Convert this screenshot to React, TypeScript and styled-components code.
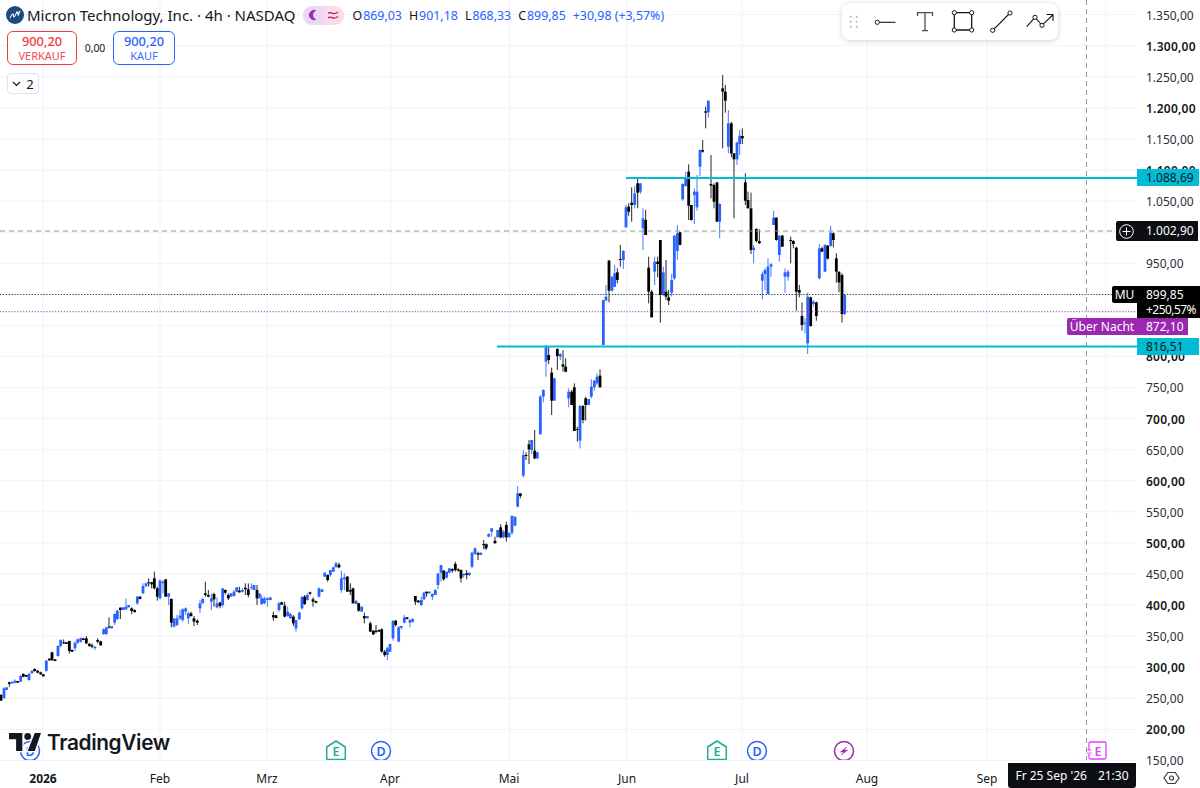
import React from "react";
import styled, { createGlobalStyle } from "styled-components";

const FONT = `"Noto Sans", "Open Sans", sans-serif`;
const INK = "#131722";
const BLUE = "#2962ff";
const RED = "#f23645";
const TEAL = "#00bcd4";
const PURPLE = "#9c27b0";

const Global = createGlobalStyle`
  html, body { margin: 0; padding: 0; height: 100%; background: #fff; overflow: hidden; }
  #root { height: 100%; }
`;

type C = number[];
// [x, wickTop, wickBottom, bodyTop, bodyBottom, black?] in 3x crop coordinates
const z9: C[] = [[3,432,452,435,452,1],[12,412,445,415,445,0],[20,412,420,412,420,0],[28,395,410,397,402,1],[37,395,400,395,400,0],[45,388,400,392,398,0],[53,393,398,393,398,1],[62,375,395,378,395,0],[70,370,382,372,380,1],[79,375,380,375,380,1],[87,368,392,372,390,0],[96,362,370,362,370,0],[104,355,365,357,363,1],[113,360,370,362,368,1],[122,365,375,367,373,1],[130,372,380,373,379,1],[139,330,365,332,362,0],[148,325,332,326,331,1],[156,305,333,307,330,1],[165,328,333,328,333,1],[174,285,320,288,318,0],[182,268,292,270,288,0],[191,268,282,277,280,1],[199,277,282,277,282,1],[208,272,310,273,303,1],[216,298,306,300,305,1],[225,275,303,278,295,0],[233,265,282,268,278,0],[242,262,278,265,275,0],[250,265,270,265,270,1],[259,258,282,265,280,1],[268,278,290,282,288,1],[276,280,295,286,290,1],[285,290,300,290,294,0],[293,265,280,270,275,1],[302,272,287,274,286,1],[311,235,255,238,252,0],[319,232,255,232,252,0],[327,202,235,230,233,1],[335,228,235,228,235,0],[344,190,225,192,218,0],[352,180,210,182,207,0],[361,172,207,173,180,1],[370,172,180,172,180,0],[378,145,180,170,178,0],[386,165,172,165,172,0],[395,172,192,175,183,1],[404,178,188,180,186,1],[412,138,165,140,160,0],[420,138,148,140,147,1],[429,100,132,108,130,0],[438,98,112,100,108,0],[446,85,110,97,100,1],[455,95,115,97,103,1],[463,65,118,85,115,1],[472,110,152,115,140,1],[480,88,148,92,145,0],[489,90,130,95,100,0],[497,88,140,88,140,1],[506,130,165,130,140,0],[514,145,232,147,218,1],[522,205,232,205,230,0],[531,195,228,205,225,0],[540,180,210,197,205,0],[548,175,215,178,210,0],[557,172,195,175,185,0],[565,185,222,190,205,0],[573,185,200,190,198,1],[582,198,228,205,215,1],[592,208,225,212,218,1],[600,150,190,160,175,0],[608,143,160,147,160,0],[616,95,140,130,135,1],[625,120,142,135,140,1],[634,130,180,145,155,0],[642,128,170,132,148,1],[651,142,175,160,172,0],[660,155,175,158,168,1],[668,115,172,115,165,0],[676,118,133,120,128,1],[685,130,150,135,145,1],[693,130,140,130,140,0],[702,120,140,125,138,0],[710,112,125,112,125,0],[718,110,128,122,127,1],[727,115,128,120,125,0],[736,100,135,113,118,1],[745,100,142,118,135,1],[754,100,118,112,115,0],[762,105,120,105,120,0],[771,105,165,120,145,1],[778,130,145,130,145,0]];
const z10: C[] = [[5,165,195,175,192,0],[13,170,193,175,190,0],[22,172,200,175,180,0],[31,172,180,172,180,0],[40,215,242,225,232,1],[48,225,235,226,234,1],[57,185,215,190,210,0],[65,185,195,187,194,1],[74,185,232,197,230,1],[83,200,230,215,228,0],[91,218,235,222,235,0],[100,225,258,230,250,1],[108,240,275,240,265,0],[118,215,240,218,238,0],[126,170,208,170,205,0],[134,165,195,170,192,1],[142,160,182,165,180,0],[150,155,165,157,161,1],[159,172,200,178,185,1],[168,182,190,183,188,1],[177,142,172,145,170,0],[186,148,156,148,156,0],[194,98,110,98,110,0],[203,103,125,105,120,1],[211,90,110,90,105,0],[220,80,95,82,95,0],[228,65,82,70,82,0],[237,68,85,74,82,1],[244,92,158,115,150,0],[253,100,150,112,118,0],[262,108,155,110,155,1],[271,130,165,150,155,1],[279,143,190,145,190,1],[288,182,192,182,192,0],[296,188,215,190,212,1],[305,200,215,200,215,0],[313,218,250,228,235,1],[322,228,235,228,235,0],[331,245,275,250,275,1],[340,270,285,272,283,1],[348,255,280,272,276,1],[357,268,275,270,275,1],[365,265,338,268,335,1],[374,330,350,335,345,1],[382,320,360,325,345,0],[390,312,335,312,335,0],[399,240,302,243,295,0],[407,240,260,242,255,1],[416,258,305,262,305,0],[424,258,268,258,263,0],[433,225,250,232,248,0],[441,232,238,232,237,1],[450,238,262,240,248,0],[458,235,248,237,245,0],[466,168,195,168,185,1],[475,180,188,182,187,1],[484,170,198,180,195,0],[492,155,180,158,178,0],[500,155,170,155,160,1],[508,155,160,155,160,0],[517,160,180,162,170,0],[526,148,165,150,165,0],[534,100,148,100,135,0],[543,75,125,75,98,0],[551,90,122,92,118,1],[560,95,115,95,113,0],[568,85,100,85,98,0],[577,85,98,87,92,1],[586,65,95,72,90,1],[595,85,95,88,92,1],[603,88,128,90,115,1],[611,100,112,102,106,0],[620,90,118,100,105,1],[628,98,108,98,105,0],[636,35,85,38,80,0],[645,22,45,25,42,0],[654,35,60,40,44,1],[662,38,45,38,45,0],[671,0,28,12,15,1],[680,12,20,12,20,0]];
const z8: C[] = [[-12,640,660,645,655,1],[-4,610,622,612,620,0],[5,595,620,595,605,0],[15,620,640,632,640,1],[23,600,622,600,622,0],[32,583,625,592,622,1],[40,600,625,605,622,0],[49,575,635,585,622,1],[57,608,622,608,622,0],[66,555,615,558,608,0],[75,560,587,560,587,0],[83,468,532,490,530,0],[91,490,505,490,498,1],[100,360,442,375,437,0],[108,367,390,375,378,1],[117,330,402,343,358,1],[125,330,372,330,360,0],[134,300,388,362,385,1],[142,365,387,367,385,0],[151,195,313,200,313,0],[160,178,217,180,200,0],[168,45,140,48,95,0],[176,48,102,75,90,1],[185,113,255,128,212,1],[193,143,212,145,212,0],[202,55,120,57,78,1],[211,70,90,72,80,0],[219,60,125,103,110,1],[227,85,127,110,125,1],[236,175,232,185,205,0],[245,180,225,185,225,1],[253,160,303,172,303,1],[262,290,335,297,300,1],[270,225,355,228,332,0],[279,225,280,228,270,1],[287,200,272,205,225,1],[296,207,225,207,225,0],[304,148,205,170,200,0],[313,150,182,152,172,0],[321,130,165,140,160,0],[330,118,172,137,172,1]];
const z7: C[] = [[40,690,825,690,825,0],[48,645,690,680,692,0],[57,570,697,572,662,1],[66,620,665,620,662,0],[74,585,650,610,650,0],[82,595,640,607,630,1],[91,525,590,567,570,1],[100,540,597,543,570,0],[108,405,472,412,472,0],[116,400,437,410,425,1],[125,352,455,398,405,1],[134,348,415,370,405,0],[143,325,415,340,368,1],[151,340,372,340,365,0],[159,415,540,445,475,0],[167,420,495,450,495,1],[176,560,700,593,665,1],[185,660,742,665,742,1],[194,560,645,575,605,0],[203,560,622,575,582,1],[211,510,758,510,675,1],[220,590,678,607,675,0],[228,570,690,665,680,1],[236,660,705,682,692,1],[245,612,680,630,668,0],[253,495,630,497,625,0],[262,465,570,490,543,0],[270,485,525,487,525,1],[278,340,392,342,388,0],[287,305,350,322,348,0],[296,283,450,305,407,1],[304,405,452,405,450,1],[313,355,462,365,375,0],[321,315,422,365,412,0],[330,238,318,240,290,0],[338,210,248,240,245,1],[347,110,175,124,128,1],[355,92,143,92,127,0],[363,255,385,342,347,1],[372,340,415,345,395,1],[381,337,455,337,455,1],[389,400,505,402,455,0],[398,15,235,55,65,1],[406,45,128,65,92,1],[415,120,250,160,230,0],[424,155,262,160,250,1],[432,250,445,250,268,1],[441,215,285,218,268,0],[449,180,255,197,222,0],[457,175,222,198,205,1],[466,310,405,337,392,1],[474,365,415,390,415,1],[483,368,552,415,540,1],[491,525,580,533,540,0],[499,475,517,477,513,1],[508,478,522,513,520,1],[517,605,688,612,632,0],[525,595,660,600,612,0],[534,565,672,590,672,0],[543,580,620,583,590,0],[551,422,465,443,465,0],[559,442,512,443,510,1],[568,495,575,497,555,0],[577,495,530,497,530,1],[585,595,668,607,620,0],[594,600,632,605,620,0],[602,500,580,510,513,1],[610,510,535,513,522,1],[619,530,722,533,665,1],[628,645,682,660,668,1],[636,697,782,738,765,1],[645,745,790,758,760,0],[653,668,852,680,820,0],[662,680,770,682,768,1],[670,690,710,695,702,0],[679,695,752,697,738,1],[688,522,628,535,625,0],[696,530,545,535,545,1],[705,522,605,525,605,0],[713,525,568,527,566,1],[722,467,530,488,528,0],[730,487,532,490,510,1],[739,550,638,565,605,1],[747,605,667,605,637,1],[756,610,758,615,732,1],[764,675,735,675,732,0]];

const sets: [C[], number, number][] = [[z9, 0, 550], [z10, 260, 540], [z8, 490, 330], [z7, 590, 70]];

const yOf = (p: number) => 574 + (450 - p) * 0.6215;
const prices = [1350,1300,1250,1200,1150,1100,1050,1000,950,900,850,800,750,700,650,600,550,500,450,400,350,300,250,200,150];
const fmt = (p: number) => (p >= 1000 ? `${Math.floor(p / 1000)}.${String(p % 1000).padStart(3, "0")},00` : `${p},00`);
const verticals = [43, 160, 267, 390.7, 509.5, 626.5, 742, 867, 987, 1105.7];

const Root = styled.div`
  display: grid;
  grid-template-columns: 1138px 62px;
  grid-template-rows: 761px 27px;
  width: 1200px;
  height: 788px;
  font-family: ${FONT};
  color: ${INK};
  background: #fff;
  overflow: hidden;
`;
const ChartPane = styled.div`
  position: relative;
  overflow: hidden;
  border-bottom: 1px solid #f0f3fa;
`;
const ChartCanvas = styled.svg`
  display: block;
  position: absolute;
  inset: 0;
`;
const Legend = styled.div`
  position: absolute;
  left: 6px;
  top: 5px;
  display: flex;
  flex-direction: column;
  align-items: flex-start;
`;
const TitleRow = styled.div`
  display: flex;
  align-items: center;
  height: 20px;
`;
const Title = styled.span`
  margin-left: 3px;
  font-size: 15px;
  white-space: nowrap;
`;
const SessionPill = styled.span`
  display: flex;
  align-items: center;
  justify-content: space-between;
  width: 41px;
  height: 19px;
  margin-left: 8px;
  padding: 0 5px;
  box-sizing: border-box;
  border-radius: 9px;
  background: linear-gradient(90deg, #ecd8f3 0%, #ecd8f3 45%, #fbdbe6 60%, #fbdbe6 100%);
`;
const Ohlc = styled.span`
  display: flex;
  margin-left: 8px;
  font-size: 12.4px;
  white-space: nowrap;
`;
const OhlcPair = styled.span`
  margin-right: 7px;
  color: ${BLUE};
  b { font-weight: 400; color: ${INK}; margin-right: 1px; }
`;
const TradeRow = styled.div`
  display: flex;
  align-items: center;
  margin: 6px 0 0 1px;
`;
const TradeButton = styled.div<{ $color: string; $w: number }>`
  display: flex;
  flex-direction: column;
  align-items: center;
  justify-content: center;
  box-sizing: border-box;
  width: ${(p) => p.$w}px;
  height: 34px;
  border: 1px solid ${(p) => p.$color};
  border-radius: 6px;
  background: #fff;
  color: ${(p) => p.$color};
`;
const TradePrice = styled.span`
  font-size: 12.8px;
  line-height: 15px;
  font-weight: 500;
`;
const TradeSide = styled.span`
  font-size: 11px;
  line-height: 13px;
  opacity: 0.9;
`;
const Spread = styled.span`
  width: 36px;
  text-align: center;
  font-size: 10.4px;
`;
const Collapse = styled.div`
  display: flex;
  align-items: center;
  justify-content: center;
  gap: 5px;
  box-sizing: border-box;
  width: 32px;
  height: 21px;
  margin: 8px 0 0 1px;
  border: 1px solid #e0e3eb;
  border-radius: 4px;
  background: #fff;
  font-size: 13px;
`;
const Toolbar = styled.div`
  position: absolute;
  left: 842px;
  top: 3px;
  display: flex;
  align-items: center;
  width: 216px;
  height: 37px;
  border-radius: 8px;
  background: #fff;
  box-shadow: 0 1px 5px rgba(19, 23, 34, 0.2);
`;
const Grip = styled.svg`
  width: 26px;
  height: 37px;
  flex: none;
`;
const Tool = styled.svg`
  width: 38px;
  height: 37px;
  flex: none;
`;
const Marker = styled.svg`
  position: absolute;
  top: 740px;
  width: 22px;
  height: 21px;
  overflow: visible;
`;
const Logo = styled.div`
  position: absolute;
  left: 9px;
  top: 727px;
  display: flex;
  align-items: center;
  gap: 6px;
  height: 30px;
  font-family: Inter, ${FONT};
  font-size: 20.8px;
  font-weight: 600;
  letter-spacing: -0.35px;
  color: #131722;
`;
const LogoMark = styled.svg`
  width: 32px;
  height: 18px;
  flex: none;
  overflow: visible;
`;
const PriceAxis = styled.div`
  position: relative;
  display: flex;
  flex-direction: column;
  padding-top: 5.7px;
  z-index: 2;
`;
const PriceTick = styled.div<{ $major: boolean }>`
  flex: none;
  height: 31.075px;
  line-height: 19px;
  padding-left: 8px;
  font-size: 12px;
  font-weight: ${(p) => (p.$major ? 600 : 400)};
  letter-spacing: ${(p) => (p.$major ? "0.25px" : "0")};
  color: ${(p) => (p.$major ? INK : "#2a2e39")};
  white-space: nowrap;
`;
const PriceTag = styled.div<{ $bg: string; $fg: string; $w: number; $top: number; $h?: number }>`
  position: absolute;
  left: -1px;
  top: ${(p) => p.$top}px;
  width: ${(p) => p.$w}px;
  height: ${(p) => p.$h ?? 17}px;
  box-sizing: border-box;
  padding-left: 9px;
  background: ${(p) => p.$bg};
  color: ${(p) => p.$fg};
  font-size: 12px;
  line-height: ${(p) => p.$h ?? 17}px;
  white-space: nowrap;
`;
const TwoLine = styled.div`
  line-height: 15px;
  padding-top: 1px;
`;
const Change = styled.span`
  letter-spacing: -0.55px;
`;
const SideTag = styled.div<{ $bg: string; $w: number; $top: number; $h: number }>`
  position: absolute;
  top: ${(p) => p.$top}px;
  right: 63px;
  display: flex;
  align-items: center;
  justify-content: center;
  width: ${(p) => p.$w}px;
  height: ${(p) => p.$h}px;
  border-radius: 2px 0 0 2px;
  background: ${(p) => p.$bg};
  color: #fff;
  font-size: 12px;
  white-space: nowrap;
`;
const TimeAxis = styled.div`
  position: relative;
`;
const TimeTick = styled.span<{ $bold?: boolean }>`
  position: absolute;
  top: 9px;
  transform: translateX(-50%);
  font-size: 12px;
  line-height: 17px;
  font-weight: ${(p) => (p.$bold ? 700 : 400)};
`;
const TimeCursor = styled.div`
  position: absolute;
  left: 1008px;
  top: 2px;
  display: flex;
  align-items: center;
  justify-content: center;
  gap: 11px;
  width: 128px;
  height: 25px;
  border-radius: 0 0 3px 3px;
  background: #0c0e14;
  color: #fff;
  font-size: 12px;
  white-space: nowrap;
`;
const Corner = styled.div`
  display: flex;
  align-items: center;
  justify-content: center;
  padding: 7px 0 0 4px;
`;

const MU = () => (
  <svg width="18" height="18" viewBox="0 0 18 18">
    <circle cx="9" cy="9" r="9" fill="#1c4b80" />
    <path d="M4 12c1-2 2-4 3-4s0 3 1 3 2-4 3-5 1 2 1 3 1-2 2-4" fill="none" stroke="#fff" strokeWidth="1.1" />
  </svg>
);

const Candles = () => (
  <>
    {sets.map(([list, ox, oy], s) =>
      list.map(([x, wt, wb, bt, bb, k], i) => {
        const cx = ox + x / 3;
        const col = k ? "#000" : BLUE;
        return (
          <g key={`${s}-${i}`}>
            <rect x={cx - 0.5} y={oy + wt / 3} width={1} height={(wb - wt) / 3} fill={col} opacity={0.85} />
            <rect x={cx - 1.4} y={oy + bt / 3} width={2.8} height={Math.max(1, (bb - bt) / 3)} fill={col} />
          </g>
        );
      })
    )}
  </>
);

const Node = ({ x, y }: { x: number; y: number }) => (
  <circle cx={x} cy={y} r="2.1" fill="#fff" stroke="#131722" strokeWidth="1" />
);

const EMark = ({ x }: { x: number }) => (
  <Marker style={{ left: x - 11 }} viewBox="0 0 22 21">
    <path d="M1.7 7 11 1l9.3 6v11.5a1 1 0 0 1-1 1H2.7a1 1 0 0 1-1-1z" fill="#fff" stroke="#22ab94" strokeWidth="1.5" />
    <text x="11" y="16" textAnchor="middle" fontFamily={FONT} fontSize="12.5" fontWeight="600" fill="#22ab94">E</text>
  </Marker>
);
const DMark = ({ x }: { x: number }) => (
  <Marker style={{ left: x - 11 }} viewBox="0 0 22 21">
    <circle cx="11" cy="11" r="9.5" fill="#fff" stroke={BLUE} strokeWidth="1.5" />
    <text x="11" y="15.5" textAnchor="middle" fontFamily={FONT} fontSize="12.5" fontWeight="600" fill={BLUE}>D</text>
  </Marker>
);

export default function App() {
  return (
    <Root>
      <Global />
      <ChartPane>
        <ChartCanvas width="1138" height="761" viewBox="0 0 1138 761">
          {prices.map((p) => (
            <line key={p} x1="0" x2="1136" y1={yOf(p)} y2={yOf(p)} stroke="#f0f3fa" strokeWidth="1" />
          ))}
          {verticals.map((x) => (
            <line key={x} x1={x} x2={x} y1="0" y2="761" stroke="#f0f3fa" strokeWidth="1" />
          ))}
          <Candles />
          <line x1="0" x2="1115" y1="294.5" y2="294.5" stroke="#131722" strokeWidth="1.2" strokeDasharray="1.2 1.7" opacity="0.85" />
          <line x1="0" x2="1138" y1="311.7" y2="311.7" stroke={PURPLE} strokeWidth="1.2" strokeDasharray="1.2 1.7" opacity="0.75" />
          <line x1="0" x2="1115" y1="231" y2="231" stroke="#9598a1" strokeWidth="1" strokeDasharray="5 4" />
          <line x1="1086.5" x2="1086.5" y1="0" y2="761" stroke="#9598a1" strokeWidth="1" strokeDasharray="5 4" />
          <line x1="626" x2="1138" y1="178" y2="178" stroke={TEAL} strokeWidth="2" />
          <line x1="497" x2="1138" y1="346.5" y2="346.5" stroke={TEAL} strokeWidth="2" />
        </ChartCanvas>

        <Legend>
          <TitleRow>
            <MU />
            <Title>Micron Technology, Inc. · 4h · NASDAQ</Title>
            <SessionPill>
              <svg width="12" height="12" viewBox="0 0 12 12">
                <path d="M7.5 1.5a4.7 4.7 0 1 0 0 9 4.9 4.9 0 0 1 0-9z" fill={PURPLE} stroke={PURPLE} />
              </svg>
              <svg width="12" height="12" viewBox="0 0 12 12" fill="none" stroke="#c2185b" strokeWidth="1.4">
                <path d="M1 4.5c2-2 3.5-.5 5 0s3 0 5-1.5M1 9c2-2 3.5-.5 5 0s3 0 5-1.500" />
              </svg>
            </SessionPill>
            <Ohlc>
              <OhlcPair><b>O</b>869,03</OhlcPair>
              <OhlcPair><b>H</b>901,18</OhlcPair>
              <OhlcPair><b>L</b>868,33</OhlcPair>
              <OhlcPair><b>C</b>899,85</OhlcPair>
              <OhlcPair>+30,98 (+3,57%)</OhlcPair>
            </Ohlc>
          </TitleRow>
          <TradeRow>
            <TradeButton $color={RED} $w={70}>
              <TradePrice>900,20</TradePrice>
              <TradeSide>VERKAUF</TradeSide>
            </TradeButton>
            <Spread>0,00</Spread>
            <TradeButton $color={BLUE} $w={62}>
              <TradePrice>900,20</TradePrice>
              <TradeSide>KAUF</TradeSide>
            </TradeButton>
          </TradeRow>
          <Collapse>
            <svg width="9" height="6" viewBox="0 0 9 6" fill="none" stroke="#131722" strokeWidth="1.2">
              <path d="m1 1 3.5 3.5L8 1" />
            </svg>
            2
          </Collapse>
        </Legend>

        <Toolbar>
          <Grip viewBox="0 0 26 37" fill="#b2b5be">
            {[8.7, 14.7].map((x) =>
              [13.7, 18.7, 23.7].map((y) => <circle key={`${x}-${y}`} cx={x} cy={y} r="1" />)
            )}
          </Grip>
          <Tool viewBox="0 0 38 37" fill="none" stroke="#131722" strokeWidth="1.1">
            <path d="M11.5 19.3h16" />
            <Node x={9.3} y={19.3} />
          </Tool>
          <Tool viewBox="0 0 38 37" fill="none" stroke="#4a4e58" strokeWidth="1.3">
            <path d="M11.5 13V9.7h15V13M19 9.7v18M16 27.7h6" />
          </Tool>
          <Tool viewBox="0 0 38 37" fill="none" stroke="#131722" strokeWidth="1.3">
            <path d="M10.3 9.7h17.4V27H10.3z" />
            <Node x={10.3} y={9.7} />
            <Node x={27.7} y={9.7} />
            <Node x={10.3} y={27} />
            <Node x={27.7} y={27} />
          </Tool>
          <Tool viewBox="0 0 38 37" fill="none" stroke="#131722" strokeWidth="1.1">
            <path d="M10.7 27.3 28 10" />
            <Node x={10.7} y={27.3} />
            <Node x={28} y={10} />
          </Tool>
          <Tool viewBox="0 0 38 37" fill="none" stroke="#131722" strokeWidth="1.1">
            <path d="M6.7 23.7l8.3-9.4 7 8L32.7 12M26.5 11.5h6.5v6.5" />
            <Node x={15} y={14.3} />
            <Node x={22} y={22.3} />
          </Tool>
        </Toolbar>

        <DMark x={30} />
        <EMark x={336} />
        <DMark x={381} />
        <EMark x={716.5} />
        <DMark x={756.5} />
        <Marker style={{ left: 833 }} viewBox="0 0 22 21">
          <circle cx="11" cy="11" r="9.5" fill="#fff" stroke={PURPLE} strokeWidth="1.5" />
          <path d="m13.5 7-6 5H11l-2.500 3 6-5H11z" fill={PURPLE} stroke={PURPLE} strokeWidth="0.5" />
        </Marker>
        <Marker style={{ left: 1086 }} viewBox="0 0 22 21">
          <path d="M3 10V3.5A1.5 1.5 0 0 1 4.5 2h14A1.5 1.5 0 0 1 20 3.5v14a1.5 1.5 0 0 1-1.5 1.5h-14A1.5 1.5 0 0 1 3 17.5V14" fill="#fff" stroke="#e040fb" strokeWidth="1.3" />
          <path d="M.5 10.5c1.5-1 2.5 0 5-.5M.5 13.5c1.500-1 2.500 0 5-.5" fill="none" stroke="#e040fb" strokeWidth="1" />
          <text x="12" y="15.5" textAnchor="middle" fontFamily={FONT} fontSize="12.5" fontWeight="600" fill="#e040fb">E</text>
        </Marker>

        <Logo>
          <LogoMark viewBox="0 0 36 20">
            <g stroke="#fff" strokeWidth="3" fill="#fff">
              <path d="M15 0H0v7h8v13h7zM29 20h-8L29 0h7z" />
              <circle cx="21" cy="3.8" r="3.8" />
            </g>
            <path d="M15 0H0v7h8v13h7zM29 20h-8L29 0h7z" fill="#131722" />
            <circle cx="21" cy="3.8" r="3.8" fill="#131722" />
          </LogoMark>
          TradingView
        </Logo>
      </ChartPane>

      <PriceAxis>
        {prices.map((p) => (
          <PriceTick key={p} $major={p % 100 === 0}>{fmt(p)}</PriceTick>
        ))}
        <PriceTag $bg={TEAL} $fg={INK} $w={62} $top={169}>1.088,69</PriceTag>
        <SideTag $bg="#0c0e14" $w={21} $top={221} $h={20}>
          <svg width="15" height="15" viewBox="0 0 15 15" fill="none" stroke="#fff" strokeWidth="1">
            <circle cx="7.5" cy="7.5" r="6.8" />
            <path d="M7.5 3.5v8M3.5 7.5h8" />
          </svg>
        </SideTag>
        <PriceTag $bg="#0c0e14" $fg="#fff" $w={61} $top={221} $h={20}>1.002,90</PriceTag>
        <SideTag $bg="#000" $w={25} $top={286} $h={17}>MU</SideTag>
        <PriceTag $bg="#000" $fg="#fff" $w={63} $top={286} $h={32}>
          <TwoLine>
            899,85
            <br />
            <Change>+250,57%</Change>
          </TwoLine>
        </PriceTag>
        <SideTag $bg={PURPLE} $w={70} $top={318} $h={17}>Über Nacht</SideTag>
        <PriceTag $bg={PURPLE} $fg="#fff" $w={51} $top={318}>872,10</PriceTag>
        <PriceTag $bg={TEAL} $fg={INK} $w={62} $top={338}>816,51</PriceTag>
      </PriceAxis>

      <TimeAxis>
        <TimeTick $bold style={{ left: 43 }}>2026</TimeTick>
        <TimeTick style={{ left: 160 }}>Feb</TimeTick>
        <TimeTick style={{ left: 267 }}>Mrz</TimeTick>
        <TimeTick style={{ left: 390 }}>Apr</TimeTick>
        <TimeTick style={{ left: 509 }}>Mai</TimeTick>
        <TimeTick style={{ left: 627 }}>Jun</TimeTick>
        <TimeTick style={{ left: 742 }}>Jul</TimeTick>
        <TimeTick style={{ left: 867 }}>Aug</TimeTick>
        <TimeTick style={{ left: 987 }}>Sep</TimeTick>
        <TimeCursor>
          <span>Fr 25 Sep &#39;26</span>
          <span>21:30</span>
        </TimeCursor>
      </TimeAxis>
      <Corner>
        <svg width="17" height="14" viewBox="0 0 17 14" fill="none" stroke="#3a3e49" strokeWidth="1.2">
          <path d="M4.8 1.5h7.400L16 7l-3.800 5.500H4.800L1 7z" />
          <circle cx="8.500" cy="7" r="2" />
        </svg>
      </Corner>
    </Root>
  );
}
